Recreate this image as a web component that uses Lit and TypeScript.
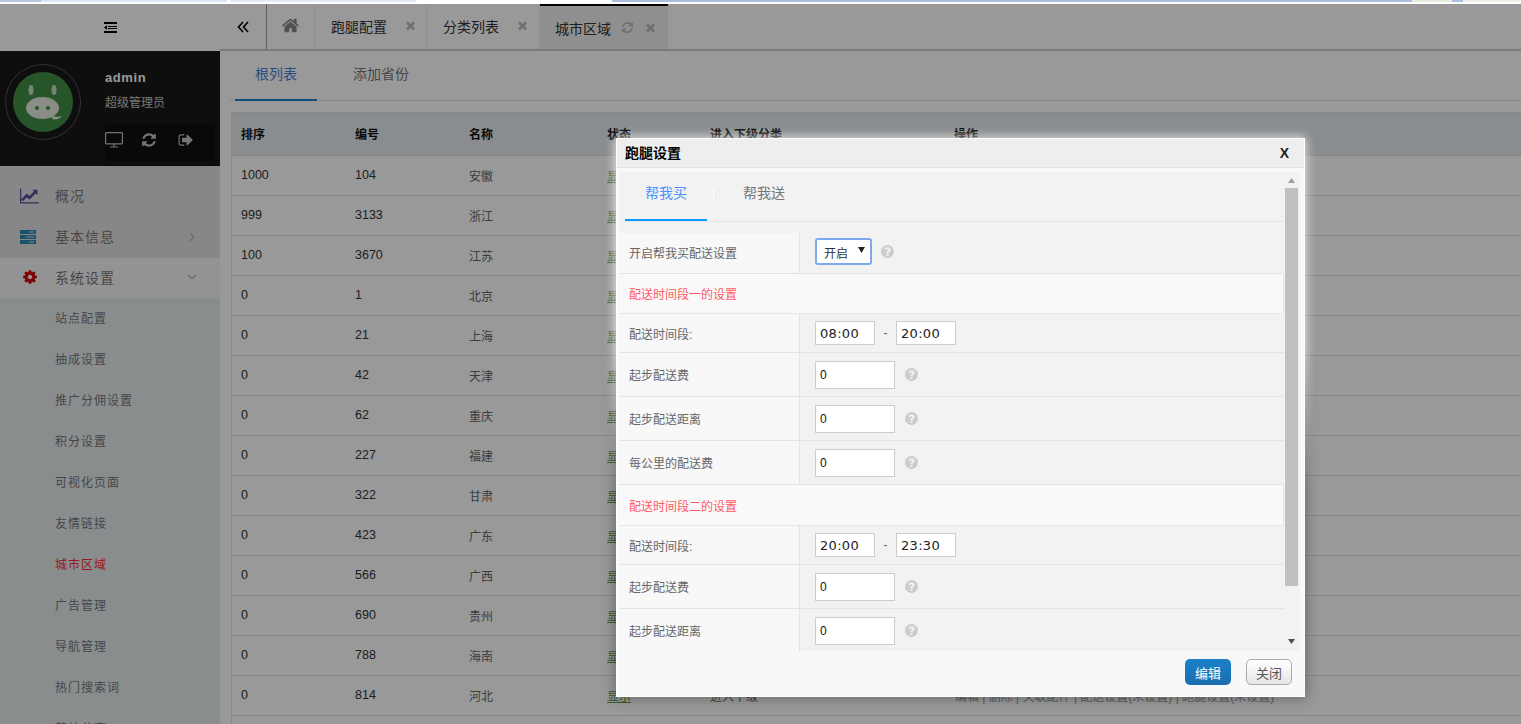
import { LitElement, html, css } from "lit";
import { customElement } from "lit/decorators.js";

const P = {
  refresh: "M1639 1056q0 5-1 7-64 268-268 434.5t-478 166.5q-146 0-282.5-55t-243.5-157l-129 129q-19 19-45 19t-45-19-19-45v-448q0-26 19-45t45-19h448q26 0 45 19t19 45-19 45l-137 137q71 66 161 102t187 36q134 0 250-65t186-179q11-17 53-117 8-23 30-23h192q13 0 22.5 9.5t9.5 22.5zm25-800v448q0 26-19 45t-45 19h-448q-26 0-45-19t-19-45 19-45l138-138q-148-137-349-137-134 0-250 65t-186 179q-11 17-53 117-8 23-30 23h-199q-13 0-22.5-9.5t-9.5-22.5v-7q65-268 270-434.5t480-166.5q146 0 284 55.5t245 156.5l130-129q19-19 45-19t45 19 19 45z",
  out: "M704 1440q0 4 1 20t.5 26.5-3 23.5-10 19.5-20.5 6.5h-320q-119 0-203.5-84.5t-84.5-203.5v-704q0-119 84.5-203.5t203.5-84.5h320q13 0 22.5 9.5t9.5 22.5q0 4 1 20t.5 26.5-3 23.5-10 19.5-20.5 6.5h-320q-66 0-113 47t-47 113v704q0 66 47 113t113 47h312l11.5 1 11.5 3 8 5.5 7 9 2 13.5zm928-544q0 26-19 45l-544 544q-19 19-45 19t-45-19-19-45v-288h-448q-26 0-45-19t-19-45v-384q0-26 19-45t45-19h448v-288q0-26 19-45t45-19 45 19l544 544q19 19 19 45z",
  times: "M1490 1322q0 40-28 68l-136 136q-28 28-68 28t-68-28l-294-294-294 294q-28 28-68 28t-68-28l-136-136q-28-28-28-68t28-68l294-294-294-294q-28-28-28-68t28-68l136-136q28-28 68-28t68 28l294 294 294-294q28-28 68-28t68 28l136 136q28 28 28 68t-28 68l-294 294 294 294q28 28 28 68z",
  home: "M1472 992v480q0 26-19 45t-45 19h-384v-384h-256v384h-384q-26 0-45-19t-19-45v-480q0-1 .5-3t.5-3l575-474 575 474q1 2 1 6zm223-69l-62 74q-8 9-21 11h-3q-13 0-21-7l-692-577-692 577q-12 8-24 7-13-2-21-11l-62-74q-8-10-7-23.5t11-21.5l719-599q32-26 76-26t76 26l244 204v-195q0-14 9-23t23-9h192q14 0 23 9t9 23v408l219 182q10 8 11 21.5t-7 23.5z",
  cog: "M1152 896q0-106-75-181t-181-75-181 75-75 181 75 181 181 75 181-75 75-181zm512-109v222q0 12-8 23t-20 13l-185 28q-19 54-39 91 35 50 107 138 10 12 10 25t-9 23q-27 37-99 108t-94 71q-12 0-26-9l-138-108q-44 23-91 38-16 136-29 186-7 28-36 28h-222q-14 0-24.5-8.5t-11.5-21.5l-28-184q-49-16-90-37l-141 107q-10 9-25 9-14 0-25-11-126-114-165-168-7-10-7-23 0-12 8-23 15-21 51-66.5t54-70.5q-27-50-41-99l-183-27q-13-2-21-12.5t-8-23.5v-222q0-12 8-23t19-13l186-28q14-46 39-92-40-57-107-138-10-12-10-24 0-10 9-23 26-36 98.5-107.5t94.5-71.5q13 0 26 10l138 107q44-23 91-38 16-136 29-186 7-28 36-28h222q14 0 24.5 8.5t11.5 21.5l28 184q49 16 90 37l142-107q9-9 24-9 13 0 25 10 129 119 165 170 7 8 7 22 0 12-8 23-15 21-51 66.5t-54 70.5q26 50 41 98l183 28q13 2 22 12.5t9 23.5z",
  chart: "M1920 1536v128h-1920v-1536h128v1408h1792zm-128-1248v435q0 21-19.5 29.5t-35.5-7.5l-121-121-633 633q-10 10-23 10t-23-10l-233-233-416 416-192-192 585-585q10-10 23-10t23 10l233 233 464-464-121-121q-16-16-7.5-35.5t29.5-19.5h435q14 0 23 9t9 23z",
  help: "M1024 1376v-192q0-14-9-23t-23-9h-192q-14 0-23 9t-9 23v192q0 14 9 23t23 9h192q14 0 23-9t9-23zm256-672q0-88-55.5-163t-138.5-116-170-41q-243 0-371 213-15 24 8 42l132 100q7 6 19 6 16 0 25-12 53-68 86-92 34-24 86-24 48 0 85.5 26t37.5 59q0 38-20 61t-68 45q-63 28-115.5 86.5t-52.5 125.5v36q0 14 9 23t23 9h192q14 0 23-9t9-23q0-19 21.5-49.5t54.5-49.5q32-18 49-28.5t46-35 44.5-48 28-60.5 12.5-81zm384 192q0 209-103 385.5t-279.5 279.5-385.5 103-385.5-103-279.5-279.5-103-385.5 103-385.5 279.5-279.5 385.5-103 385.5 103 279.5 279.5 103 385.5z",
};

const fa = (d: string, cls: string, vb = "0 0 1792 1792") =>
  html`<svg class=${cls} viewBox=${vb} aria-hidden="true"><path d=${d} fill="currentColor"></path></svg>`;

const rows = [
  ["1000", "104", "安徽"], ["999", "3133", "浙江"], ["100", "3670", "江苏"], ["0", "1", "北京"],
  ["0", "21", "上海"], ["0", "42", "天津"], ["0", "62", "重庆"], ["0", "227", "福建"],
  ["0", "322", "甘肃"], ["0", "423", "广东"], ["0", "566", "广西"], ["0", "690", "贵州"],
  ["0", "788", "海南"], ["0", "814", "河北"],
];
const subs = ["站点配置", "抽成设置", "推广分佣设置", "积分设置", "可视化页面", "友情链接", "城市区域", "广告管理", "导航管理", "热门搜索词", "整站分享"];

@customElement("app-root")
export class AppRoot extends LitElement {
  static styles = css`
    :host { display: block; position: relative; width: 1521px; height: 724px; overflow: hidden; background: #fff;
      font-family: "Liberation Sans", "Noto Sans CJK SC", sans-serif; font-size: 12px; color: #333; }
    .strip { height: 4px; box-sizing: border-box; border-bottom: 2px solid #fff;
      background: linear-gradient(90deg, #b4c6de 0 41px, #dde6f0 41px 227px, #fff 227px 230px, #e4ebf3 230px 416px, #fff 416px 612px,
        #a9bfdd 612px 1412px, #e8ebe2 1412px 1452px, #a9bfdd 1452px 1463px, #eef0e8 1463px 1521px); }
    .page { display: grid; grid-template-columns: 220px 1fr; height: 720px; }
    .side { background: #e4edef; overflow: hidden; }
    .brand { height: 47px; display: flex; align-items: center; justify-content: center; background: #fff; }
    .brand svg { width: 13px; height: 11px; display: block; }
    .profile { height: 115px; background: #181818; display: grid; grid-template-columns: 105px 1fr; }
    .avatar { width: 86px; height: 102px; display: block; }
    .pinfo { display: flex; flex-direction: column; color: #fff; }
    .pname { font-weight: 700; font-size: 13px; letter-spacing: .6px; margin-top: 18px; line-height: 18px; color: #fff; }
    .prole { margin-top: 7px; line-height: 18px; color: #c8c8c8; }
    .picons { margin-top: 12px; width: 110px; height: 37px; background: #101010; display: flex; align-items: center; gap: 18px; color: #c4c4c4; padding-bottom: 6px; box-sizing: border-box; }
    .picons svg { display: block; }
    .i-desk { width: 18px; height: 16px; }
    .i-16 { width: 16px; height: 16px; }
    .i-out { margin-left: 3px; }
    .menu { background: #e2e2e2; padding-top: 10px; }
    .mi { height: 41px; display: flex; align-items: center; color: #777; font-size: 14px; letter-spacing: 1px; position: relative; padding: 0 0 3px 55px; box-sizing: border-box; }
    .mi.open { background: #f5f5f5; height: 40px; padding-bottom: 2px; }
    .mi .ic { position: absolute; left: 20px; top: calc(50% - 1px); transform: translateY(-50%); display: block; }
    .c-chart { width: 20px; height: 18px; color: #5a4a9c; }
    .c-cog { width: 16px; height: 16px; color: #d40000; left: 22px !important; }
    .chev { position: absolute; left: 188px; top: calc(50% - 1px); transform: translateY(-50%); width: 8px; height: 10px; color: #b0b0b0; }
    .chev.down { left: 187px; width: 10px; height: 8px; }
    .subs { background: #e4ebed; }
    .si { height: 41px; box-sizing: border-box; display: flex; align-items: center; padding: 0 0 2px 55px; color: #777; font-size: 12px; letter-spacing: 1px; }
    .si.on { color: #ff2a2a; }

    .main { min-width: 0; background: #fff; }
    .tabs { height: 47px; box-sizing: border-box; border-bottom: 2px solid #ccc; display: flex; background: #fff; }
    .t { display: flex; align-items: center; height: 45px; box-sizing: border-box; font-size: 14px; color: #333; }
    .t-back { width: 47px; justify-content: center; border-right: 1px solid #999; background: #fff; }
    .t-back svg { width: 12px; height: 12px; }
    .t-home { width: 48px; justify-content: center; border-right: 1px solid #eee; color: #888; padding-bottom: 3px; }
    .t-home svg { width: 19px; height: 19px; }
    .t-n { width: 112px; border-right: 1px solid #eee; padding: 0 0 2px 16px; gap: 17px; background: #fff; }
    .t-a { width: 128px; padding-left: 15px; background: #efefef; border-top: 2px solid #000; gap: 10px; margin-left: 1px; }
    .t-x { width: 13px; height: 13px; color: #bbb; flex: none; }
    .t-r { width: 13px; height: 13px; color: #bbb; flex: none; }
    .sub { height: 50px; margin-left: 10px; box-sizing: border-box; border-bottom: 1px solid #ddd; display: flex; font-size: 14px; }
    .st { width: 82px; margin-left: 5px; height: 50px; box-sizing: border-box; display: flex; align-items: center; justify-content: center; color: #777; padding-bottom: 4px; }
    .st.on { color: #4a7fd8; border-bottom: 2px solid #1c80c8; }
    .st + .st { width: 56px; margin-left: 36px; padding-bottom: 6px; }
    .tbl { margin: 11px 0 0 11px; min-height: 640px; border-left: 1px solid #e2e2e2; border-top: 1px solid #e2e2e2; }
    .tr { display: grid; grid-template-columns: 114px 114px 138px 103px 244px 1fr; height: 40px; align-items: center; border-bottom: 1px solid #e0e0e0; box-sizing: border-box; padding: 0 0 1px 9px; font-size: 12.5px; }
    .tr.h { height: 43px; padding-bottom: 1px; background: #e6ebef; font-size: 12px; font-weight: 700; color: #111; }
    .tr .cn { font-size: 12px; color: #666; }
    .tr .on { font-size: 12px; color: #5f9a3c; text-decoration: underline; }
    .tr .ops { font-size: 12px; color: #999; white-space: nowrap; padding-left: 1px; }

    .mask { position: absolute; inset: 4px 0 0 0; background: rgba(0,0,0,.4); }
    .modal { position: absolute; left: 616px; top: 138px; width: 689px; height: 559px; display: flex; flex-direction: column; box-sizing: border-box;
      background: #f8f8f8; border: 1px solid #fff; }
    .fx { position: absolute; inset: -31px; pointer-events: none; }
    .fx i { position: absolute; inset: 30px; display: block; }
    .glow { -webkit-mask-image: linear-gradient(#000 0 40%, transparent 62%); mask-image: linear-gradient(#000 0 40%, transparent 62%); }
    .glow i { box-shadow: 0 0 10px 1px rgba(255,255,255,.75); }
    .shade { -webkit-mask-image: linear-gradient(transparent 38%, #000 60%); mask-image: linear-gradient(transparent 38%, #000 60%); }
    .shade i { box-shadow: 0 0 12px 2px rgba(0,0,0,.28); }
    .mt { height: 28px; flex: none; box-sizing: content-box; background: #eee; border-bottom: 1px solid #e3e3e3; display: flex; align-items: center; justify-content: space-between; padding: 0 15px 0 8px; position: relative; }
    .mt b { font-size: 14px; color: #000; padding-bottom: 2px; }
    .mt i { font: 700 14px "Liberation Sans", sans-serif; color: #222; font-style: normal; padding-bottom: 1px; }
    .mb { flex: none; height: 479px; margin: 4px 4px 0 3px; background: #f2f2f2; display: flex; overflow: hidden; position: relative; }
    .mc { width: 664px; flex: none; overflow: hidden; }
    .mtabs { height: 49px; margin-left: 5px; border-bottom: 1px solid #e3e3e3; display: flex; align-items: stretch; font-size: 14px; color: #777; }
    .mtab { width: 82px; height: 49px; box-sizing: border-box; display: flex; align-items: center; justify-content: center; padding-bottom: 7px; position: relative; }
    .mtab.on { color: #4a90ff; border-bottom: 2px solid #0a9bff; }
    .mtab + .msep + .mtab { margin-left: 9px; padding-bottom: 9px; }
    .msep { width: 1px; height: 11px; background: #fff; align-self: center; margin: 0 0 0 6px; transform: translateY(-2px); }
    .form { margin-top: 11px; }
    .fr { display: grid; grid-template-columns: 180px 1fr; border-bottom: 1px solid #e3e3e3; box-sizing: border-box; }
    .h40 { height: 41px; } .h39 { height: 39px; } .h44 { height: 44px; }
    .h40 .fl { padding-bottom: 1px; }
    .h40 .fv { padding-bottom: 3px; }
    .fl { background: #f8f8f8; border-right: 1px solid #e3e3e3; display: flex; align-items: center; padding-left: 9px; font-size: 12px; color: #666; }
    .fv { display: flex; align-items: center; padding-left: 15px; }
    .sec { height: 40px; box-sizing: border-box; background: #f9f9f9; border: 1px solid #e6e6e6; border-width: 0 1px 1px 0; display: flex; align-items: center; padding-left: 9px; color: #ff5a64; font-size: 12px; }
    .sec.s2 { height: 41px; }
    .sel { width: 57px; height: 27px; box-sizing: border-box; background: #fff; border: 2px solid #7ea9ee; border-radius: 3px; display: flex; align-items: center; justify-content: space-between; padding: 1px 5px 0 7px; font-size: 12px; color: #333; }
    .sel svg { width: 7px; height: 6px; margin-top: -5px; }
    .help { width: 15px; height: 15px; color: #ccc; margin-left: 8px; display: block; flex: none; }
    .tm { width: 60px; height: 24px; box-sizing: border-box; background: #fff; border: 1px solid #ccc; display: flex; align-items: center; padding-left: 4px; font: 13px "DejaVu Sans", sans-serif; letter-spacing: .3px; color: #222; }
    .dash { width: 21px; text-align: center; color: #666; font-size: 12px; }
    .num { width: 80px; height: 28px; box-sizing: border-box; background: #fff; border: 1px solid #ccc; display: flex; align-items: center; padding-left: 4px; font-size: 12px; color: #111; }
    .num + .help { margin-left: 9px; }
    .sb { width: 13px; margin-left: 1px; flex: none; display: flex; flex-direction: column; }
    .sbar { flex: none; height: 16px; display: flex; align-items: center; justify-content: center; }
    .sbar.dn { padding-bottom: 3px; box-sizing: border-box; }
    .sbar svg { width: 7px; height: 5px; display: block; }
    .thumb { height: 398px; background: #c0c0c0; flex: none; }
    .sgap { flex: 1; }
    .mf { flex: 1; display: flex; justify-content: flex-end; align-items: flex-start; gap: 15px; padding: 8px 12px 0 0; }
    .btn { width: 46px; height: 26px; box-sizing: border-box; border-radius: 5px; display: flex; align-items: center; justify-content: center; font-size: 13px; }
    .btn.p { background: linear-gradient(#1a80c8, #1a6fb0); color: #fff; }
    .btn.d { background: linear-gradient(#fff, #e6e6e6); border: 1px solid #aaa; color: #555; }
  `;

  private formRow(label: string, cls: string, val: unknown) {
    return html`<div class="fr ${cls}"><div class="fl">${label}</div><div class="fv">${val}</div></div>`;
  }
  private numRow(label: string) {
    return this.formRow(label, "h44", html`<div class="num">0</div>${fa(P.help, "help")}`);
  }
  private timeRow(a: string, b: string) {
    return this.formRow("配送时间段:", "h39", html`<div class="tm">${a}</div><div class="dash">-</div><div class="tm">${b}</div>`);
  }

  render() {
    return html`
      <div class="strip"></div>
      <div class="page">
        <aside class="side">
          <div class="brand">
            <svg viewBox="0 0 13 11"><path d="M0 0h13v2H0zM4 4h9v1H4zM4 6h9v1H4zM0 9h13v2H0zM3 3.2v4.6L0 5.5z" fill="#000"></path></svg>
          </div>
          <div class="profile">
            <svg class="avatar" viewBox="0 0 86 102">
              <circle cx="43" cy="51" r="37.5" fill="none" stroke="#555" stroke-width="1"></circle>
              <circle cx="43" cy="51" r="30" fill="#3f8e44"></circle>
              <ellipse cx="31" cy="39" rx="2.5" ry="5" fill="#c8dcc4"></ellipse>
              <ellipse cx="54" cy="39" rx="2.5" ry="5" fill="#c8dcc4"></ellipse>
              <ellipse cx="42.5" cy="57" rx="16.5" ry="11" fill="#e6eadf"></ellipse>
              <path d="M50 64q6 3 12 1q-3 4-9 3.5z" fill="#e6eadf"></path>
              <circle cx="37" cy="57" r="2" fill="#3f8e44"></circle>
              <circle cx="48" cy="57" r="2" fill="#3f8e44"></circle>
            </svg>
            <div class="pinfo">
              <div class="pname">admin</div>
              <div class="prole">超级管理员</div>
              <div class="picons">
                <svg class="i-desk" viewBox="0 0 18 16" fill="none" stroke="currentColor" stroke-width="1.2"><rect x=".6" y=".6" width="16.8" height="11.3" rx="1"></rect><path d="M9 12v2.5M5 15h8"></path></svg>
                ${fa(P.refresh, "i-16")}
                ${fa(P.out, "i-16 i-out")}
              </div>
            </div>
          </div>
          <div class="menu">
            <div class="mi">${fa(P.chart, "ic c-chart", "0 0 2048 1792")}概况</div>
            <div class="mi">
              <svg class="ic" width="16" height="14" viewBox="0 0 16 14"><path d="M0 0h16v4H0zM0 5h16v4H0zM0 10h16v4H0z" fill="#2c8bb0"></path><path d="M9 1.5h5v1H9zM6 6.5h8v1H6zM9 11.5h5v1H9z" fill="#e2e2e2"></path></svg>
              基本信息
              <svg class="chev" viewBox="0 0 8 10" fill="none" stroke="currentColor" stroke-width="1.2"><path d="M2 1l4 4-4 4"></path></svg>
            </div>
            <div class="mi open">${fa(P.cog, "ic c-cog")}系统设置
              <svg class="chev down" viewBox="0 0 10 8" fill="none" stroke="currentColor" stroke-width="1.2"><path d="M1 2l4 4 4-4"></path></svg>
            </div>
          </div>
          <div class="subs">
            ${subs.map((s) => html`<div class="si ${s === "城市区域" ? "on" : ""}">${s}</div>`)}
          </div>
        </aside>
        <main class="main">
          <div class="tabs">
            <div class="t t-back"><svg viewBox="0 0 12 12" fill="none" stroke="#000" stroke-width="1.6"><path d="M6 1L1.5 6 6 11M11 1L6.5 6 11 11"></path></svg></div>
            <div class="t t-home">${fa(P.home, "", "0 0 1792 1792")}</div>
            <div class="t t-n">跑腿配置${fa(P.times, "t-x")}</div>
            <div class="t t-n">分类列表${fa(P.times, "t-x")}</div>
            <div class="t t-a">城市区域${fa(P.refresh, "t-r")}${fa(P.times, "t-x")}</div>
          </div>
          <div class="sub"><div class="st on">根列表</div><div class="st">添加省份</div></div>
          <div class="tbl">
            <div class="tr h"><div>排序</div><div>编号</div><div>名称</div><div>状态</div><div>进入下级分类</div><div>操作</div></div>
            ${rows.map((r, i) => {
              const last = i === rows.length - 1;
              return html`<div class="tr"><div>${r[0]}</div><div>${r[1]}</div><div class="cn">${r[2]}</div><div class="on">显示</div><div class="cn">${last ? "进入下级" : ""}</div><div class="ops">${last ? "编辑 | 删除 | 关联配件 | 配送设置(未设置) | 跑腿设置(未设置)" : ""}</div></div>`;
            })}
          </div>
        </main>
      </div>
      <div class="mask"></div>
      <div class="modal">
        <div class="fx glow"><i></i></div>
        <div class="fx shade"><i></i></div>
        <div class="mt"><b>跑腿设置</b><i>X</i></div>
        <div class="mb">
          <div class="mc">
            <div class="mtabs"><div class="mtab on">帮我买</div><div class="msep"></div><div class="mtab">帮我送</div></div>
            <div class="form">
              ${this.formRow("开启帮我买配送设置", "h40", html`<div class="sel">开启<svg viewBox="0 0 7 6"><path d="M0 0h7L3.5 6z" fill="#222"></path></svg></div>${fa(P.help, "help")}`)}
              <div class="sec">配送时间段一的设置</div>
              ${this.timeRow("08:00", "20:00")}
              ${this.numRow("起步配送费")}
              ${this.numRow("起步配送距离")}
              ${this.numRow("每公里的配送费")}
              <div class="sec s2">配送时间段二的设置</div>
              ${this.timeRow("20:00", "23:30")}
              ${this.numRow("起步配送费")}
              ${this.numRow("起步配送距离")}
            </div>
          </div>
          <div class="sb">
            <div class="sbar"><svg viewBox="0 0 7 5"><path d="M3.5 0L7 5H0z" fill="#a0a0a0"></path></svg></div>
            <div class="thumb"></div>
            <div class="sgap"></div>
            <div class="sbar dn"><svg viewBox="0 0 7 5"><path d="M0 0h7L3.5 5z" fill="#505050"></path></svg></div>
          </div>
        </div>
        <div class="mf"><div class="btn p">编辑</div><div class="btn d">关闭</div></div>
      </div>
    `;
  }
}
